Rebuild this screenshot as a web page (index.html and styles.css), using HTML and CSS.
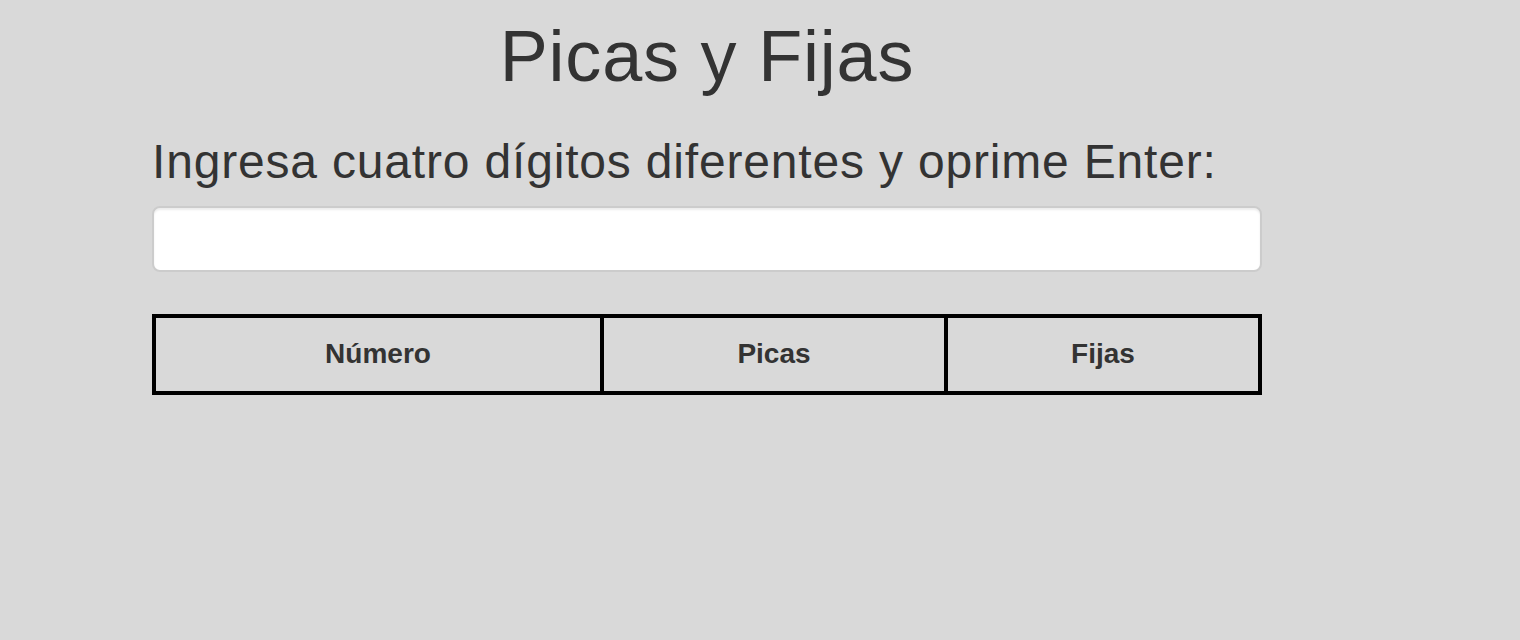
FILE: index.html
```html
<!DOCTYPE html>
<html lang="es">
<head>
<meta charset="utf-8">
<title>Picas y Fijas</title>
<link rel="stylesheet" href="styles.css">
</head>
<body>
<main class="container">
  <h1 class="title">Picas y Fijas</h1>
  <h3 class="prompt">Ingresa cuatro dígitos diferentes y oprime Enter:</h3>
  <input class="guess" type="text" aria-label="Número">
  <table class="results">
    <thead>
      <tr>
        <th class="col-num">Número</th>
        <th class="col-picas">Picas</th>
        <th class="col-fijas">Fijas</th>
      </tr>
    </thead>
    <tbody></tbody>
  </table>
</main>
</body>
</html>
```

FILE: styles.css
```css
html, body {
  margin: 0;
  padding: 0;
  background: #d9d9d9;
  height: 100%;
}

body {
  font-family: "Liberation Sans", Arial, Helvetica, sans-serif;
  color: #333;
}

.container {
  width: 1110px;
  margin-left: 152px;
  display: flex;
  flex-direction: column;
}

.title {
  margin: 17px 0 0;
  font-size: 72px;
  font-weight: normal;
  line-height: 1.1;
  letter-spacing: 0.8px;
  text-align: center;
}

.prompt {
  margin: 40px 0 0;
  font-size: 48px;
  font-weight: normal;
  line-height: 1.1;
  letter-spacing: 0.82px;
}

.guess {
  box-sizing: border-box;
  margin: 17px 0 0;
  width: 1110px;
  height: 66px;
  border: 2px solid #ccc;
  border-radius: 8px;
  background: #fff;
  box-shadow: inset 0 2px 2px rgba(0, 0, 0, 0.075);
  font-size: 28px;
  padding: 12px 24px;
  outline: none;
}

.results {
  margin-top: 42px;
  width: 1110px;
  border-collapse: collapse;
  table-layout: fixed;
}

.results th {
  border: 4px solid #000;
  height: 73px;
  padding: 0;
  font-size: 28px;
  font-weight: bold;
  text-align: center;
  vertical-align: middle;
}

.col-num { width: 444px; }
.col-picas { width: 340px; }
```
